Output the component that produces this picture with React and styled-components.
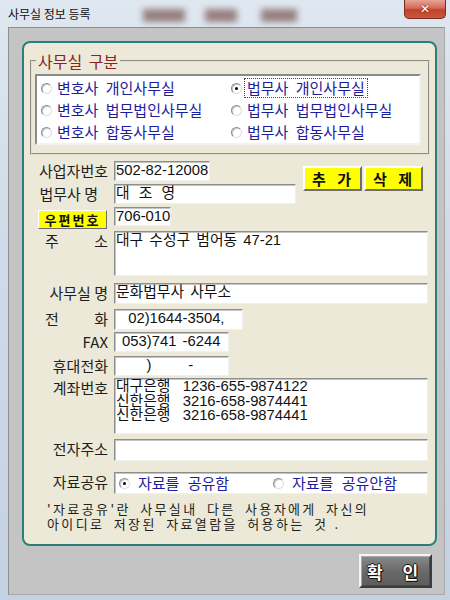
import React from 'react'
import styled, { createGlobalStyle } from 'styled-components'

const GlobalStyle = createGlobalStyle`
  html, body {
    margin: 0;
    padding: 0;
    background: #c9d6e4;
  }
  body {
    font-family: "Noto Sans CJK KR", "Noto Sans", sans-serif;
  }
  * {
    box-sizing: border-box;
  }
`

const officeTypes = [
  ['변호사 개인사무실', false],
  ['법무사 개인사무실', true],
  ['변호사 법무법인사무실', false],
  ['법무사 법무법인사무실', false],
  ['변호사 합동사무실', false],
  ['법무사 합동사무실', false],
]

export default function App() {
  return (
    <Window>
      <GlobalStyle />
      <TitleBar>
        <TitleText>사무실 정보 등록</TitleText>
        <Blur $w={42} $ml={52} />
        <Blur $w={32} $ml={20} />
        <Blur $w={36} $ml={24} />
        <CloseButton>✕</CloseButton>
      </TitleBar>

      <Client>
        <Panel>
          <GroupBox>
            <Legend>사무실 구분</Legend>
            <RadioBox>
              {officeTypes.map(([label, checked]) => (
                <RadioItem key={label}>
                  <RadioDot $checked={checked} />
                  <RadioLabel $focus={checked}>{label}</RadioLabel>
                </RadioItem>
              ))}
            </RadioBox>
          </GroupBox>

          <TopSection>
            <TopRows>
              <Row $mt={0}>
                <Label>사업자번호</Label>
                <Field $w={96} $h={20}>502-82-12008</Field>
              </Row>
              <Row $mt={3}>
                <Label $pr={10}>법무사 명</Label>
                <Field $w={182} $h={20} $spread>대 조 영</Field>
              </Row>
            </TopRows>
            <ButtonGroup>
              <YellowButton>추 가</YellowButton>
              <YellowButton>삭 제</YellowButton>
            </ButtonGroup>
          </TopSection>

          <Row $mt={3}>
            <LabelCell>
              <ZipButton>우편번호</ZipButton>
            </LabelCell>
            <Field $w={57} $h={19}>706-010</Field>
          </Row>

          <Row $mt={2}>
            <Label><Spread>주<span>소</span></Spread></Label>
            <Field $w={314} $h={45}>대구 수성구 범어동 47-21</Field>
          </Row>

          <Row $mt={7}>
            <Label>사무실 명</Label>
            <Field $w={314} $h={21}>문화법무사 사무소</Field>
          </Row>

          <Row $mt={5}>
            <Label><Spread>전<span>화</span></Spread></Label>
            <Field $w={129} $h={21}>{'  02)1644-3504,'}</Field>
          </Row>

          <Row $mt={2}>
            <Label>FAX</Label>
            <Field $w={115} $h={20}>{' 053)741 -6244'}</Field>
          </Row>

          <Row $mt={4}>
            <Label>휴대전화</Label>
            <Field $w={115} $h={20}>{'     )      -'}</Field>
          </Row>

          <Row $mt={2}>
            <Label>계좌번호</Label>
            <Field $w={314} $h={56} $lines>
              {'대구은행  1236-655-9874122\n신한은행  3216-658-9874441\n신한은행  3216-658-9874441'}
            </Field>
          </Row>

          <Row $mt={5}>
            <Label>전자주소</Label>
            <Field $w={314} $h={22} />
          </Row>

          <Row $mt={11}>
            <Label>자료공유</Label>
            <ShareBox>
              <ShareOption>
                <RadioDot $checked />
                <ShareText>자료를 공유함</ShareText>
              </ShareOption>
              <ShareOption>
                <RadioDot />
                <ShareText>자료를 공유안함</ShareText>
              </ShareOption>
            </ShareBox>
          </Row>

          <Note>
            <NoteLine>'자료공유'란 사무실내 다른 사용자에게 자신의</NoteLine>
            <NoteLine>아이디로 저장된 자료열람을 허용하는 것<Period>.</Period></NoteLine>
          </Note>
        </Panel>

        <Footer>
          <OkButton>확 인</OkButton>
        </Footer>
      </Client>
    </Window>
  )
}

const Window = styled.div`
  width: 450px;
  height: 600px;
  display: flex;
  flex-direction: column;
  padding: 0 5px 5px 8px;
  background: linear-gradient(180deg, #dfe7f0 0%, #cfdbe8 40%, #c3d2e3 100%);
  overflow: hidden;
`

const TitleBar = styled.div`
  height: 27px;
  display: flex;
  align-items: flex-start;
  flex-shrink: 0;
`

const TitleText = styled.div`
  margin-top: 6px;
  font-size: 12px;
  line-height: 16px;
  color: #111;
`

const Blur = styled.span`
  width: ${p => p.$w}px;
  height: 13px;
  margin-left: ${p => p.$ml}px;
  margin-top: 9px;
  background: #5e2e26;
  opacity: 0.55;
  filter: blur(3px);
`

const CloseButton = styled.div`
  margin-left: auto;
  margin-right: -1px;
  width: 42px;
  height: 19px;
  display: flex;
  align-items: center;
  justify-content: center;
  border: 1px solid #7a2b20;
  border-top: none;
  border-radius: 0 0 5px 5px;
  background: linear-gradient(180deg, #e8a396 0%, #d46a55 45%, #c0432c 55%, #c9573d 100%);
  color: #fff;
  font-family: "DejaVu Sans", sans-serif;
  font-weight: bold;
  font-size: 12px;
  text-shadow: 0 0 2px #5a1a10;
`

const Client = styled.div`
  flex: 1;
  display: flex;
  flex-direction: column;
  padding: 13px 7px 0 13px;
  background: #c4c4c4;
  border: 1px solid #8e8e8e;
  border-right-color: #a8a8a8;
  border-bottom-color: #a8a8a8;
`

const Panel = styled.div`
  display: flex;
  flex-direction: column;
  padding: 0 5px 13px 6px;
  background: #ece9d8;
  border: 2px solid #2a7f7b;
  border-radius: 8px;
`

const GroupBox = styled.fieldset`
  margin: 8px 0 0 0;
  padding: 3px 7px 8px 3px;
  border: 2px groove #e2e0d4;
  min-width: 0;
`

const Legend = styled.legend`
  padding: 0 2px;
  margin-left: 1px;
  font-size: 16px;
  line-height: 20px;
  color: #8a2222;
  word-spacing: 3px;
`

const RadioBox = styled.div`
  display: grid;
  grid-template-columns: 190px 1fr;
  grid-auto-rows: 22px;
  align-content: start;
  height: 71px;
  padding: 1px 0 0 0;
  background: #fff;
  border: 2px solid;
  border-color: #8a8a8a #f2f2f2 #f2f2f2 #8a8a8a;
`

const RadioItem = styled.div`
  display: flex;
  align-items: center;
  padding-left: 4px;
`

const RadioDot = styled.span`
  position: relative;
  flex-shrink: 0;
  width: 11px;
  height: 11px;
  border-radius: 50%;
  background: #fff;
  border: 1px solid;
  border-color: #8c8c8c #dedede #dedede #8c8c8c;
  box-shadow: inset 1px 1px 0 #c8c8c8;

  &::after {
    content: '';
    display: ${p => (p.$checked ? 'block' : 'none')};
    position: absolute;
    left: 3px;
    top: 3px;
    width: 3px;
    height: 3px;
    border-radius: 50%;
    background: #000;
  }
`

const RadioLabel = styled.span`
  margin-left: 3px;
  padding: 0 2px;
  font-size: 15px;
  line-height: 18px;
  color: #1c1c9e;
  word-spacing: 4px;
  outline: ${p => (p.$focus ? '1px dotted #444' : 'none')};
`

const TopSection = styled.div`
  display: flex;
  align-items: flex-start;
  gap: 7px;
  margin-top: 6px;
`

const TopRows = styled.div`
  display: flex;
  flex-direction: column;
`

const ButtonGroup = styled.div`
  display: flex;
  gap: 2px;
  margin-top: 5px;
`

const YellowButton = styled.div`
  width: 59px;
  height: 25px;
  display: flex;
  align-items: center;
  justify-content: center;
  background: #ffff00;
  border: 2px solid;
  border-color: #ffffff #6e6e6e #6e6e6e #ffffff;
  font-size: 15px;
  font-weight: bold;
  color: #111;
  letter-spacing: 2px;
  word-spacing: 4px;
`

const Row = styled.div`
  display: flex;
  align-items: flex-start;
  gap: 6px;
  margin-top: ${p => p.$mt}px;
`

const LabelCell = styled.div`
  width: 78px;
  display: flex;
  justify-content: flex-end;
  flex-shrink: 0;
`

const Label = styled.div`
  width: 78px;
  flex-shrink: 0;
  display: flex;
  justify-content: flex-end;
  padding-right: ${p => p.$pr || 0}px;
  font-size: 15px;
  line-height: 20px;
  color: #1e1e1e;
  white-space: nowrap;
`

const Spread = styled.div`
  width: 63px;
  display: flex;
  justify-content: space-between;
`

const ZipButton = styled.div`
  width: 69px;
  height: 19px;
  margin-top: 3px;
  margin-right: 1px;
  display: flex;
  align-items: center;
  justify-content: center;
  background: #ffff00;
  border: 1px solid;
  border-color: #ffffff #6e6e6e #6e6e6e #ffffff;
  font-size: 13px;
  font-weight: bold;
  color: #111;
  letter-spacing: 2px;
`

const Field = styled.div`
  width: ${p => p.$w}px;
  height: ${p => p.$h}px;
  flex-shrink: 0;
  padding: 0 0 0 1px;
  background: #fff;
  border: 1px solid;
  border-color: #8e8e8e #f0f0f0 #f0f0f0 #8e8e8e;
  box-shadow: inset 1px 1px 0 #c4c4c4;
  font-family: "Liberation Sans", "Noto Sans CJK KR", sans-serif;
  font-size: 14.8px;
  line-height: ${p => (p.$lines ? '14.5px' : '17px')};
  color: #111;
  white-space: pre;
  word-spacing: ${p => (p.$spread ? '5px' : '2px')};
`

const ShareBox = styled.div`
  width: 314px;
  height: 22px;
  display: flex;
  align-items: center;
  padding-left: 4px;
  background: #fff;
  border: 1px solid;
  border-color: #8e8e8e #f0f0f0 #f0f0f0 #8e8e8e;
  box-shadow: inset 1px 1px 0 #c4c4c4;
`

const ShareOption = styled.div`
  width: 160px;
  display: flex;
  align-items: center;
`

const ShareText = styled.span`
  margin-left: 8px;
  font-size: 15px;
  line-height: 18px;
  color: #1c1c9e;
  word-spacing: 5px;
`

const Note = styled.div`
  display: flex;
  flex-direction: column;
  margin-top: 7px;
  padding-left: 17px;
  color: #1e1e1e;
`

const NoteLine = styled.div`
  height: 15px;
  font-size: 13px;
  line-height: 15px;
  letter-spacing: 2.4px;
  word-spacing: 4px;
  white-space: nowrap;
`

const Period = styled.span`
  margin-left: 6px;
`

const Footer = styled.div`
  display: flex;
  justify-content: flex-end;
  padding: 8px 5px 0 0;
`

const OkButton = styled.div`
  width: 73px;
  height: 34px;
  display: flex;
  align-items: center;
  justify-content: center;
  background: linear-gradient(180deg, #8a8a8a 0%, #6a6a6a 50%, #5c5c5c 100%);
  border: 2px solid;
  border-color: #f4f4f4 #3c3c3c #3c3c3c #f4f4f4;
  box-shadow: inset 1px 1px 0 #a8a8a8, inset -1px -1px 0 #4a4a4a;
  font-size: 17px;
  font-weight: bold;
  color: #fff;
  letter-spacing: 6px;
  word-spacing: 4px;
  text-shadow: 1px 0 0 #111, -1px 0 0 #111, 0 1px 0 #111, 0 -1px 0 #111, 1px 1px 0 #111;
`
